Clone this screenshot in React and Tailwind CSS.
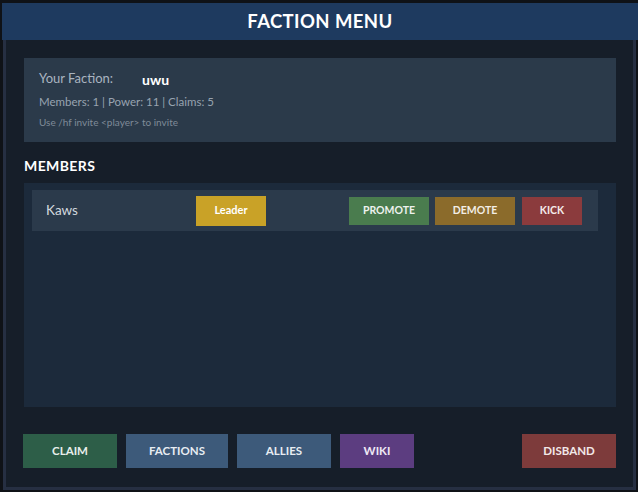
export default function App() {
  const font = { fontFamily: 'Lato, "Noto Sans", sans-serif' };
  return (
    <div className="w-[638px] h-[492px] bg-[#0f1217] pt-[3px] pl-[2px] overflow-hidden" style={font}>
      {/* Title bar */}
      <div className="h-[37px] bg-[#1e3a5f] flex items-center justify-center">
        <h1 className="text-white text-[18.5px] font-bold tracking-[0.4px]">FACTION MENU</h1>
      </div>

      {/* Frame body */}
      <div className="ml-[1px] w-[633px] h-[450px] border-x-[3px] border-b-[3px] border-[#262f42] bg-[#161e29] pt-[18px] pl-[18px] pr-[17px] flex flex-col">
        {/* Faction info */}
        <div className="h-[84px] bg-[#2b3a4a] px-[15px] pt-[12px] flex flex-col">
          <div className="flex items-center h-[18px]">
            <span className="w-[103px] text-[13px] text-[#a9b4c0]">Your Faction:</span>
            <span className="text-[14px] font-bold text-white">uwu</span>
          </div>
          <div className="mt-[5px] text-[11.5px] text-[#98a3b0]">Members: 1 | Power: 11 | Claims: 5</div>
          <div className="mt-[5px] text-[10px] text-[#7f8a98]">Use /hf invite &lt;player&gt; to invite</div>
        </div>

        <h2 className="mt-[14px] h-[20px] leading-[20px] text-[14px] font-bold text-white tracking-[0.4px]">MEMBERS</h2>

        {/* Member list */}
        <div className="mt-[7px] h-[224px] bg-[#1c2a3b] pt-[7px] pl-[8px] pr-[18px]">
          <div className="h-[41px] bg-[#2b3a4b] flex items-center pl-[14px] pr-[16px]">
            <span className="w-[150px] text-[13.5px] text-[#d2d8de]">Kaws</span>
            <span className="w-[70px] h-[30px] bg-[#c9a227] flex items-center justify-center text-[11px] font-bold text-white">Leader</span>
            <div className="ml-auto flex gap-[6px]">
              <button className="w-[80px] h-[28px] bg-[#4a7c4e] text-[10.5px] font-bold text-[#eef2ee]">PROMOTE</button>
              <button className="w-[80px] h-[28px] bg-[#8b6b2b] text-[10.5px] font-bold text-[#f2eee6]">DEMOTE</button>
              <button className="ml-[1px] w-[60px] h-[28px] bg-[#8b3b3d] text-[10.5px] font-bold text-[#f4eaea]">KICK</button>
            </div>
          </div>
        </div>

        {/* Bottom actions */}
        <div className="mt-[27px] -ml-[1px] flex gap-[9px]">
          <button className="w-[94px] h-[34px] bg-[#2d5e48] text-[11.5px] font-bold text-[#e8eeeb]">CLAIM</button>
          <button className="w-[102px] h-[34px] bg-[#3d5a7a] text-[11.5px] font-bold text-[#e8edf2]">FACTIONS</button>
          <button className="w-[94px] h-[34px] bg-[#3d5a7a] text-[11.5px] font-bold text-[#e8edf2]">ALLIES</button>
          <button className="w-[74px] h-[34px] bg-[#5c3d80] text-[11.5px] font-bold text-[#efe9f4]">WIKI</button>
          <button className="ml-auto w-[94px] h-[34px] bg-[#7d3b3b] text-[11.5px] font-bold text-[#f2e8e8]">DISBAND</button>
        </div>
      </div>
    </div>
  );
}
